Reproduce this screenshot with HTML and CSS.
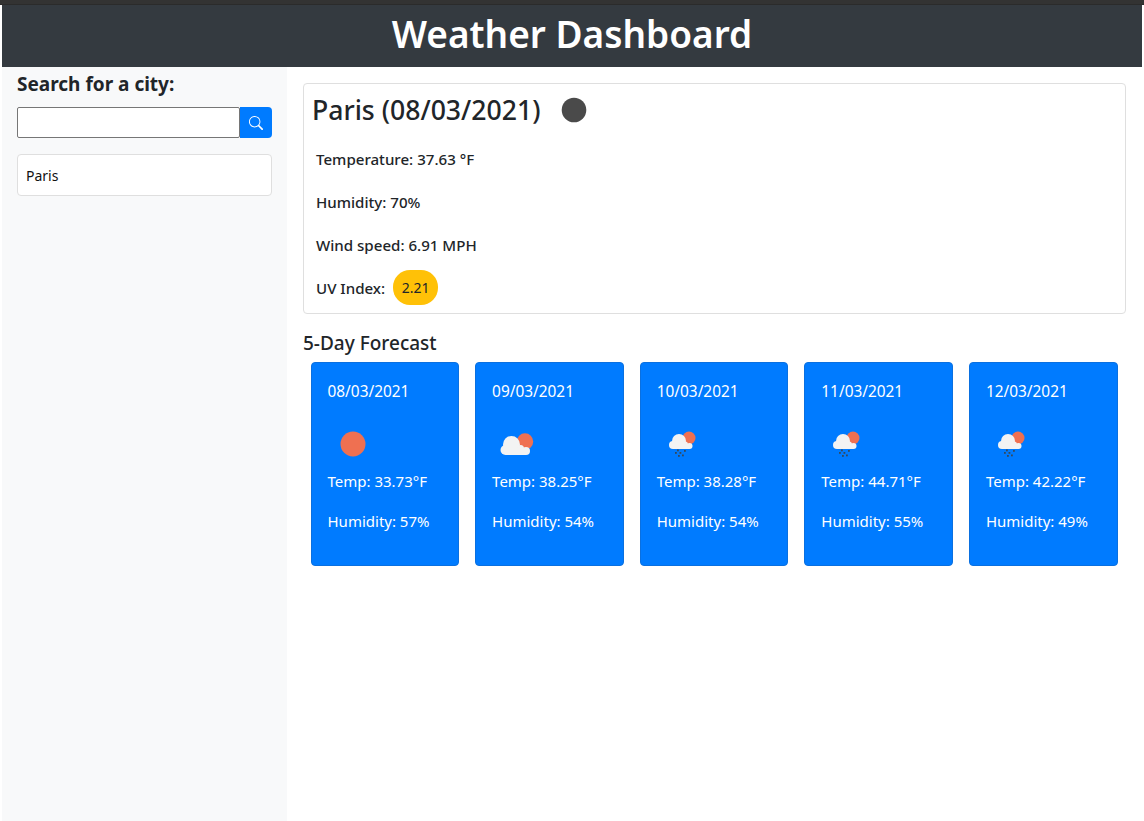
FILE: index.html
```html
<!DOCTYPE html>
<html lang="en">
<head>
<meta charset="utf-8">
<title>Weather Dashboard</title>
<link rel="stylesheet" href="styles.css">
</head>
<body>
<div class="strip"></div>
<div class="page">
  <header class="header"><h1>Weather Dashboard</h1></header>
  <div class="layout">
    <aside class="sidebar">
      <h2 class="search-title">Search for a city:</h2>
      <form class="search">
        <input class="search-input" type="text" aria-label="City">
        <button class="search-btn" type="button" aria-label="Search">
          <svg width="16" height="16" viewBox="0 0 16 16" fill="#fff"><path d="M11.742 10.344a6.5 6.5 0 1 0-1.397 1.398h-.001c.03.04.062.078.098.115l3.85 3.85a1 1 0 0 0 1.415-1.414l-3.85-3.85a1.007 1.007 0 0 0-.115-.1zM12 6.5a5.5 5.5 0 1 1-11 0 5.5 5.5 0 0 1 11 0z"/></svg>
        </button>
      </form>
      <div class="history">Paris</div>
    </aside>
    <main class="main">
      <section class="today">
        <div class="today-head">
          <h2 class="city">Paris (08/03/2021)</h2>
          <svg class="today-icon" width="26" height="26" viewBox="0 0 26 26"><circle cx="13" cy="13" r="12.3" fill="#4a4a4a"/></svg>
        </div>
        <p class="stat">Temperature: 37.63 °F</p>
        <p class="stat">Humidity: 70%</p>
        <p class="stat">Wind speed: 6.91 MPH</p>
        <p class="stat uv-row">UV Index: <span class="uv">2.21</span></p>
      </section>
      <h3 class="forecast-title">5-Day Forecast</h3>
      <section class="forecast">
        <article class="day">
          <p class="date">08/03/2021</p>
          <div class="icon-row">
            <svg width="50" height="50" viewBox="0 0 50 50"><circle cx="25" cy="25" r="12.5" fill="#ef7051"/></svg>
          </div>
          <p class="line">Temp: 33.73°F</p>
          <p class="line">Humidity: 57%</p>
        </article>
        <article class="day">
          <p class="date">09/03/2021</p>
          <div class="icon-row">
            <svg width="50" height="50" viewBox="0 0 50 50"><use href="#partly"/></svg>
          </div>
          <p class="line">Temp: 38.25°F</p>
          <p class="line">Humidity: 54%</p>
        </article>
        <article class="day">
          <p class="date">10/03/2021</p>
          <div class="icon-row">
            <svg width="50" height="50" viewBox="0 0 50 50"><use href="#snow"/></svg>
          </div>
          <p class="line">Temp: 38.28°F</p>
          <p class="line">Humidity: 54%</p>
        </article>
        <article class="day">
          <p class="date">11/03/2021</p>
          <div class="icon-row">
            <svg width="50" height="50" viewBox="0 0 50 50"><use href="#snow"/></svg>
          </div>
          <p class="line">Temp: 44.71°F</p>
          <p class="line">Humidity: 55%</p>
        </article>
        <article class="day">
          <p class="date">12/03/2021</p>
          <div class="icon-row">
            <svg width="50" height="50" viewBox="0 0 50 50"><use href="#snow"/></svg>
          </div>
          <p class="line">Temp: 42.22°F</p>
          <p class="line">Humidity: 49%</p>
        </article>
      </section>
    </main>
  </div>
</div>
<svg class="defs" width="0" height="0">
  <defs>
    <g id="partly">
      <circle cx="33" cy="22.5" r="8.2" fill="#ef7051"/>
      <g fill="#f3f3f3">
        <circle cx="13.5" cy="31" r="5"/>
        <circle cx="19.5" cy="25.5" r="8.5"/>
        <circle cx="28.5" cy="29.5" r="3.5"/>
        <circle cx="34" cy="32" r="4"/>
        <rect x="13.5" y="30" width="20.5" height="6"/>
      </g>
    </g>
    <g id="snow">
      <circle cx="32" cy="19" r="6.5" fill="#ef7051"/>
      <g fill="#f3f3f3">
        <circle cx="16" cy="26" r="4"/>
        <circle cx="22" cy="22" r="7"/>
        <circle cx="28" cy="25.5" r="3"/>
        <circle cx="32.5" cy="27" r="3"/>
        <rect x="16" y="25" width="16.5" height="5"/>
      </g>
      <g fill="#34495c">
        <rect x="20" y="30.5" width="1.8" height="1.8"/><rect x="27" y="31" width="1.8" height="1.8"/>
        <rect x="18" y="33" width="1.8" height="1.8"/><rect x="22.5" y="33" width="1.8" height="1.8"/>
        <rect x="21" y="36" width="1.8" height="1.8"/><rect x="25" y="35.5" width="1.8" height="1.8"/>
      </g>
    </g>
  </defs>
</svg>
</body>
</html>
```

FILE: styles.css
```css
* { box-sizing: border-box; }
html, body { margin: 0; padding: 0; height: 100%; }
body {
  background: #fff;
  color: #212529;
  font-family: "Noto Sans", "Open Sans", sans-serif;
  font-size: 15px;
  overflow: hidden;
}
.strip { height: 5px; background: #333; border-bottom: 1px solid #2b2b2b; }
.page { padding: 0 2px; height: calc(100% - 5px); display: flex; flex-direction: column; }
.header { height: 62px; padding-bottom: 4px; background: #343a40; display: flex; align-items: center; justify-content: center; flex: none; }
.header h1 { margin: 0; color: #fff; font-size: 37px; font-weight: 600; line-height: 1.2; }
.layout { display: flex; flex: 1; min-height: 0; }
.sidebar { width: 285px; flex: none; background: #f8f9fa; padding: 6px 15px 0; }
.search-title { margin: 0 0 11px; font-size: 19px; font-weight: 700; line-height: 23px; }
.search { display: flex; height: 31px; }
.search-input { flex: 1; min-width: 0; height: 31px; border: 1px solid #767676; border-radius: 2px; background: #fff; padding: 0; }
.search-btn { width: 32px; height: 31px; padding: 0; border: 0; border-radius: 0 4px 4px 0; background: #007bff; display: flex; align-items: center; justify-content: center; }
.search-btn svg { width: 14px; height: 14px; }
.history { margin-top: 16px; height: 42px; padding: 0 8px; background: #fff; border: 1px solid #dfdfdf; border-radius: 4px; display: flex; align-items: center; font-size: 14px; color: #111; }
.main { flex: 1; min-width: 0; padding: 16px 16px 0; }
.today { height: 231px; border: 1px solid #dfdfdf; border-radius: 4px; padding: 8px 8px 0; }
.today-head { display: flex; align-items: flex-start; height: 36px; margin-bottom: 9px; }
.city { margin: 0; font-size: 26.6px; font-weight: 500; line-height: 36px; }
.today-icon { margin: 5px 0 0 21px; }
.stat { margin: 0 0 0 4px; height: 43px; display: flex; align-items: center; font-size: 15.1px; font-weight: 500; line-height: 22px; }
.uv-row { gap: 8px; }
.uv { display: inline-flex; align-items: center; justify-content: center; width: 45px; height: 35px; border-radius: 17px; background: #ffc107; font-weight: 400; font-size: 14px; }
.forecast-title { margin: 17px 0 7px; font-size: 19px; font-weight: 500; line-height: 24px; }
.forecast { display: grid; grid-template-columns: repeat(5, 1fr); gap: 16px; padding: 0 8.5px 0 7.5px; }
.day { height: 204px; background: #007bff; border: 1px solid #0a70e0; border-radius: 4px; padding: 17px 16px 0; color: #fff; }
.date { margin: 0; font-size: 15.4px; line-height: 24px; }
.line { margin: 0 0 16px; font-size: 15px; line-height: 24px; }
.icon-row { height: 50px; margin: 15px 0 0; }
.icon-row svg { display: block; }
.defs { position: absolute; }
```
